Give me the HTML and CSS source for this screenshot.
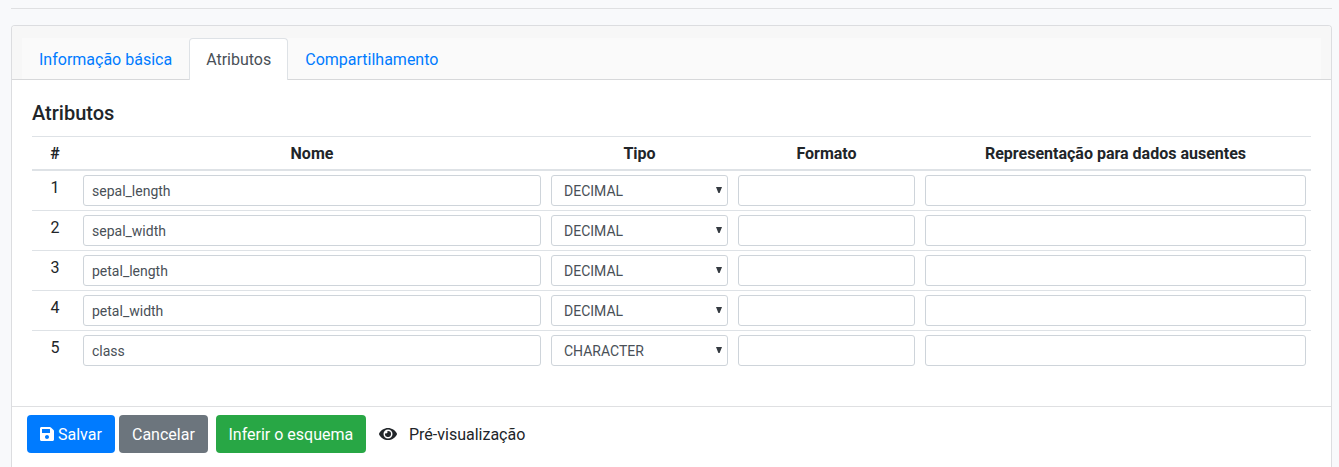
FILE: index.html
```html
<!DOCTYPE html>
<html lang="pt-BR">
<head>
<meta charset="utf-8">
<title>Atributos</title>
<link rel="stylesheet" href="styles.css">
</head>
<body>
<main class="page">
  <hr class="divider">
  <section class="card">
    <header class="card-header">
      <nav class="tabs">
        <a class="tab">Informação básica</a>
        <a class="tab active">Atributos</a>
        <a class="tab">Compartilhamento</a>
      </nav>
    </header>
    <div class="card-body">
      <h5 class="title">Atributos</h5>
      <div class="table">
        <div class="row head"><div>#</div><div>Nome</div><div>Tipo</div><div>Formato</div><div>Representação para dados ausentes</div></div>
        <div class="row"><div class="num">1</div><div class="control">sepal_length</div><div class="control select">DECIMAL<svg class="arrow" viewBox="0 0 6 6"><path d="M0 0h6L3.6 6H2.4z"/></svg></div><div class="control"></div><div class="control"></div></div>
        <div class="row"><div class="num">2</div><div class="control">sepal_width</div><div class="control select">DECIMAL<svg class="arrow" viewBox="0 0 6 6"><path d="M0 0h6L3.6 6H2.4z"/></svg></div><div class="control"></div><div class="control"></div></div>
        <div class="row"><div class="num">3</div><div class="control">petal_length</div><div class="control select">DECIMAL<svg class="arrow" viewBox="0 0 6 6"><path d="M0 0h6L3.6 6H2.4z"/></svg></div><div class="control"></div><div class="control"></div></div>
        <div class="row"><div class="num">4</div><div class="control">petal_width</div><div class="control select">DECIMAL<svg class="arrow" viewBox="0 0 6 6"><path d="M0 0h6L3.6 6H2.4z"/></svg></div><div class="control"></div><div class="control"></div></div>
        <div class="row"><div class="num">5</div><div class="control">class</div><div class="control select">CHARACTER<svg class="arrow" viewBox="0 0 6 6"><path d="M0 0h6L3.6 6H2.4z"/></svg></div><div class="control"></div><div class="control"></div></div>
      </div>
    </div>
    <footer class="card-footer">
      <div class="btn primary"><svg class="icon-save" viewBox="0 0 448 512"><path d="M433.941 129.941l-83.882-83.882A48 48 0 0 0 316.118 32H48C21.490 32 0 53.490 0 80v352c0 26.510 21.490 48 48 48h352c26.510 0 48-21.490 48-48V163.882a48 48 0 0 0-14.059-33.941zM224 416c-35.346 0-64-28.654-64-64s28.654-64 64-64 64 28.654 64 64-28.654 64-64 64zm96-304.520V212c0 6.627-5.373 12-12 12H76c-6.627 0-12-5.373-12-12V108c0-6.627 5.373-12 12-12h228.520c3.183 0 6.235 1.264 8.485 3.515l3.480 3.480A11.996 11.996 0 0 1 320 111.480z"/></svg><span class="label">Salvar</span></div>
      <div class="btn secondary"><span class="label">Cancelar</span></div>
      <div class="btn success"><span class="label">Inferir o esquema</span></div>
      <div class="btn preview"><svg class="icon-eye" viewBox="0 0 576 512"><path d="M572.520 241.400C518.290 135.590 410.930 64 288 64S57.680 135.640 3.480 241.410a32.350 32.350 0 0 0 0 29.190C57.710 376.410 165.070 448 288 448s230.320-71.640 284.520-177.410a32.350 32.350 0 0 0 0-29.190zM288 400a144 144 0 1 1 144-144 143.930 143.930 0 0 1-144 144zm0-240a95.310 95.310 0 0 0-25.310 3.790 47.850 47.850 0 0 1-66.900 66.900A95.780 95.780 0 1 0 288 160z"/></svg><span class="label">Pré-visualização</span></div>
    </footer>
  </section>
</main>
</body>
</html>
```
FILE: styles.css
```css
* { box-sizing: border-box; }
body {
  margin: 0;
  background: #f8f9fb;
  color: #212529;
  font: 400 16px/24px Roboto, sans-serif;
}
.page { padding: 8px 7px 0 11px; }
.divider { margin: 0 0 16px; border: 0; border-top: 1px solid #dfe0e2; }
.card {
  height: 442px;
  border: 1px solid #dcdde0;
  border-bottom: 0;
  border-radius: 4px 4px 0 0;
  background: #fff;
}
.card-header {
  height: 54px;
  padding: 12px 10px 0;
  border-bottom: 1px solid #d7d8da;
  border-radius: 3px 3px 0 0;
  background: #f7f7f7;
}
.tabs { display: flex; height: 42px; margin-bottom: -1px; background: linear-gradient(#fafafa, #fafafa) 0 0 / 100% 41px no-repeat; }
.tab {
  padding: 9px 16px 0;
  border: 1px solid transparent;
  border-bottom: 0;
  border-radius: 4px 4px 0 0;
  color: #007bff;
}
.tab.active { border-color: #dee2e6; background: #fff; color: #495057; }
.card-body { height: 326px; padding: 21px 20px 0; }
.title { margin: 0 0 11px; font-size: 20px; line-height: 24px; font-weight: 500; }
.row {
  display: grid;
  grid-template-columns: 36px 458px 177px 177px 381px;
  column-gap: 10px;
  height: 40px;
  padding: 4px 5px 0;
  border-top: 1px solid #dee2e6;
}
.head {
  height: 35px;
  padding-top: 5px;
  border-bottom: 2px solid #dee2e6;
  font-weight: 700;
  text-align: center;
}
.head + .row { height: 39px; border-top: 0; }
.num { padding-top: 1px; text-align: center; }
.control {
  height: 31px;
  padding: 5px 8px 0;
  border: 1px solid #ced4da;
  border-radius: 3px;
  color: #495057;
  font-size: 14px;
  line-height: 21px;
}
.select {
  display: flex;
  justify-content: space-between;
  padding-left: 12px;
  padding-right: 5px;
}
.arrow { width: 6px; height: 6px; margin-top: 6px; fill: #343a40; }
.card-footer { display: flex; height: 61px; padding: 8px 15px; border-top: 1px solid #dfe0e2; }
.btn {
  display: flex;
  align-items: center;
  height: 38px;
  padding: 0 13px;
  border-radius: 4px;
  color: #fff;
  white-space: nowrap;
}
.label { padding-top: 2px; }
.primary { width: 88px; margin-right: 4px; background: #007bff; }
.secondary { width: 89px; margin-right: 8px; background: #6c757d; }
.success { width: 150px; padding-left: 12.5px; background: #28a745; }
.preview { color: #212529; }
.icon-save { width: 14px; height: 16px; margin-right: 4px; fill: currentColor; }
.icon-eye { width: 18px; height: 16px; margin-right: 12px; fill: currentColor; }
```
